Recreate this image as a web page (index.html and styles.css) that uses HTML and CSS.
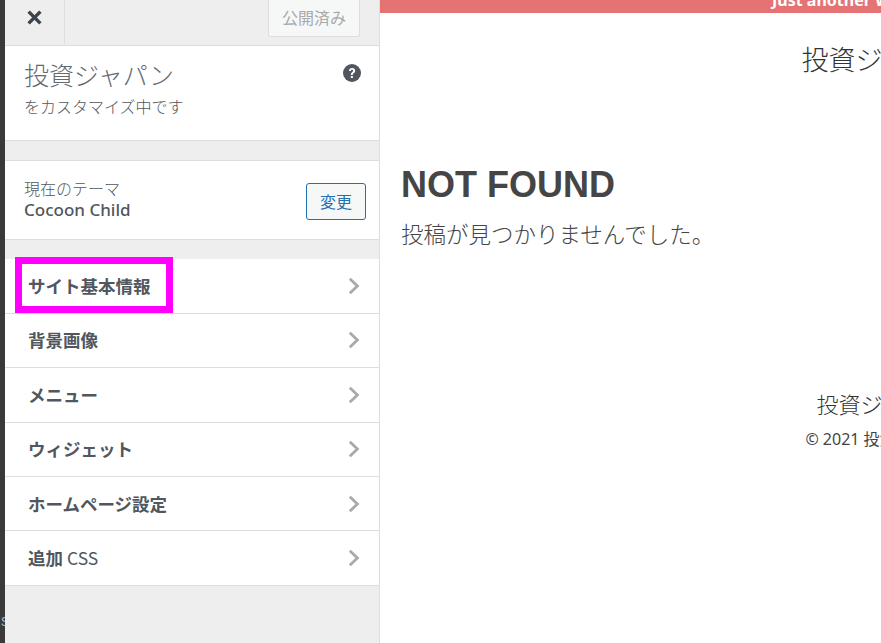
FILE: index.html
```html
<!DOCTYPE html>
<html lang="ja">
<head>
<meta charset="utf-8">
<title>投資ジャパン</title>
<link rel="stylesheet" href="styles.css">
</head>
<body>
<div class="page">
  <div class="strip"><span class="strip-text">S</span></div>
  <aside class="sidebar">
    <header class="topbar">
      <div class="close">
        <svg class="close-icon" viewBox="0 0 14 14" aria-hidden="true"><path d="M1.5 1.5 12.5 12.5M12.5 1.5 1.5 12.5"/></svg>
      </div>
      <button class="publish">公開済み</button>
    </header>
    <section class="info">
      <div class="info-text">
        <div class="site-name">投資ジャパン</div>
        <div class="customizing">をカスタマイズ中です</div>
      </div>
      <svg class="help" viewBox="0 0 18 18" aria-hidden="true"><circle cx="9" cy="9" r="9" fill="#50575e"/><path d="M5.9 7C6 5.1 7.3 4 9.1 4c1.8 0 3.1 1.1 3.1 2.7 0 1.2-.6 1.9-1.5 2.5-.7.5-.9.8-.9 1.5v.3H7.9v-.5c0-1.1.4-1.7 1.2-2.3.7-.5 1-.8 1-1.4 0-.6-.4-1-1.1-1-.7 0-1.1.5-1.2 1.2zM7.8 12h2.1v2.1H7.8z" fill="#fff"/></svg>
    </section>
    <section class="theme">
      <div class="theme-text">
        <div class="theme-label">現在のテーマ</div>
        <div class="theme-name">Cocoon Child</div>
      </div>
      <button class="change">変更</button>
    </section>
    <nav class="menu">
      <div class="item"><span class="item-label">サイト基本情報</span><svg class="chev" viewBox="0 0 12 18" aria-hidden="true"><path d="M1.8 1.8 9.4 9 1.8 16.2"/></svg></div>
      <div class="item"><span class="item-label">背景画像</span><svg class="chev" viewBox="0 0 12 18" aria-hidden="true"><path d="M1.8 1.8 9.4 9 1.8 16.2"/></svg></div>
      <div class="item"><span class="item-label">メニュー</span><svg class="chev" viewBox="0 0 12 18" aria-hidden="true"><path d="M1.8 1.8 9.4 9 1.8 16.2"/></svg></div>
      <div class="item"><span class="item-label">ウィジェット</span><svg class="chev" viewBox="0 0 12 18" aria-hidden="true"><path d="M1.8 1.8 9.4 9 1.8 16.2"/></svg></div>
      <div class="item"><span class="item-label">ホームページ設定</span><svg class="chev" viewBox="0 0 12 18" aria-hidden="true"><path d="M1.8 1.8 9.4 9 1.8 16.2"/></svg></div>
      <div class="item"><span class="item-label">追加 <span class="item-latin">CSS</span></span><svg class="chev" viewBox="0 0 12 18" aria-hidden="true"><path d="M1.8 1.8 9.4 9 1.8 16.2"/></svg></div>
      <div class="highlight"></div>
    </nav>
  </aside>
  <main class="preview">
    <div class="preview-inner">
      <div class="tagline"><span class="tagline-text">Just another WordPress site</span></div>
      <div class="logo">投資ジャパン</div>
      <article class="article">
        <h1 class="not-found">NOT FOUND</h1>
        <p class="not-found-text">投稿が見つかりませんでした。</p>
      </article>
      <footer class="footer">
        <div class="footer-logo">投資ジャパン</div>
        <div class="copyright">© 2021 投資ジャパン</div>
      </footer>
    </div>
  </main>
</div>
</body>
</html>
```
FILE: styles.css
```css
* { box-sizing: border-box; }
html, body { margin: 0; height: 100%; overflow: hidden; }
body { font-family: "Noto Sans", "Noto Sans CJK JP", sans-serif; background: #fff; color: #50575e; }
.page { display: flex; width: 881px; height: 643px; overflow: hidden; }

.strip { width: 5px; flex: none; background: #3c3a38; overflow: hidden; padding-top: 614px; }
.strip-text { display: block; margin-left: 1px; font: 12px/16px "Liberation Sans", sans-serif; color: #8ec5f0; }

.sidebar { width: 375px; flex: none; background: #eee; border-right: 1px solid #ddd; display: flex; flex-direction: column; }

.topbar { height: 46px; flex: none; display: flex; justify-content: space-between; align-items: flex-start; padding-right: 19px; border-bottom: 1px solid #ddd; }
.close { width: 60px; height: 44px; border-right: 1px solid #ddd; display: flex; justify-content: center; padding-top: 10px; }
.close-icon { width: 15px; height: 15px; fill: none; stroke: #3c434a; stroke-width: 3.2; }
.publish { width: 92px; height: 37px; margin-top: 0; padding: 0 0 3px; border: 1px solid #dcdcde; border-top: 0; border-radius: 0 0 3px 3px; background: #f6f7f7; color: #a7aaad; font: 16px/20px "Noto Sans CJK JP", sans-serif; }

.info { height: 95px; flex: none; background: #fff; border-bottom: 1px solid #ddd; display: flex; justify-content: space-between; align-items: flex-start; padding: 12px 18px 0 19px; }
.site-name { font: 300 25px/32px "Noto Sans CJK JP", sans-serif; color: #646970; }
.customizing { margin-top: 6px; font: 300 16px/20px "Noto Sans CJK JP", sans-serif; color: #50575e; }
.help { width: 18px; height: 18px; margin-top: 6px; }

.theme { height: 80px; flex: none; margin-top: 19px; background: #fff; border-top: 1px solid #ddd; border-bottom: 1px solid #ddd; display: flex; justify-content: space-between; align-items: center; padding: 0 13px 0 19px; }
.theme-text { margin-top: -2px; }
.theme-label { font: 300 16px/20px "Noto Sans CJK JP", sans-serif; color: #50575e; }
.theme-name { margin-top: 1px; font: 500 17px/22px "Noto Sans", sans-serif; color: #50575e; }
.change { width: 60px; height: 37px; margin-top: 2px; padding: 0; border: 1px solid #2271b1; border-radius: 3px; background: #f6f7f7; color: #2271b1; font: 16px/20px "Noto Sans CJK JP", sans-serif; }

.menu { position: relative; margin-top: 19px; padding-top: 0.4px; }
.item { height: 54.4px; background: #fff; border-bottom: 1px solid #ddd; display: flex; justify-content: space-between; align-items: center; padding: 0 19px 0 23px; }
.item-label { font: 700 17.5px/24px "Noto Sans CJK JP", "Noto Sans", sans-serif; color: #50575e; }
.item-latin { font-weight: 400; }
.chev { width: 12px; height: 18px; fill: none; stroke: #a7aaad; stroke-width: 2.8; }
.highlight { position: absolute; left: 10px; top: -2px; width: 158px; height: 56px; border: 7px solid #f0f; }

.preview { flex: 1; min-width: 0; height: 100%; overflow: hidden; background: #fff; }
.preview-inner { width: 1005px; }
.tagline { height: 13px; background: #e57373; overflow: hidden; text-align: center; }
.tagline-text { display: block; margin-top: -10px; font: 700 16px/20px "Noto Sans", sans-serif; color: #fff; }
.logo { margin-top: 27px; text-align: center; font: 300 27px/38px "Noto Sans CJK JP", sans-serif; color: #333; }
.article { margin-top: 83px; padding-left: 21px; }
.not-found { margin: 0; font: 700 36px/48px "Liberation Sans", sans-serif; color: #454545; }
.not-found-text { margin: 8px 0 0; padding-left: 0; font: 300 22.5px/32px "Noto Sans CJK JP", sans-serif; color: #454545; }
.footer { margin-top: 138px; text-align: center; color: #333; }
.footer-logo { font: 300 22px/32px "Noto Sans CJK JP", sans-serif; }
.copyright { margin-top: 9px; font: 16px/22px "Noto Sans", "Noto Sans CJK JP", sans-serif; color: #454545; }
```
